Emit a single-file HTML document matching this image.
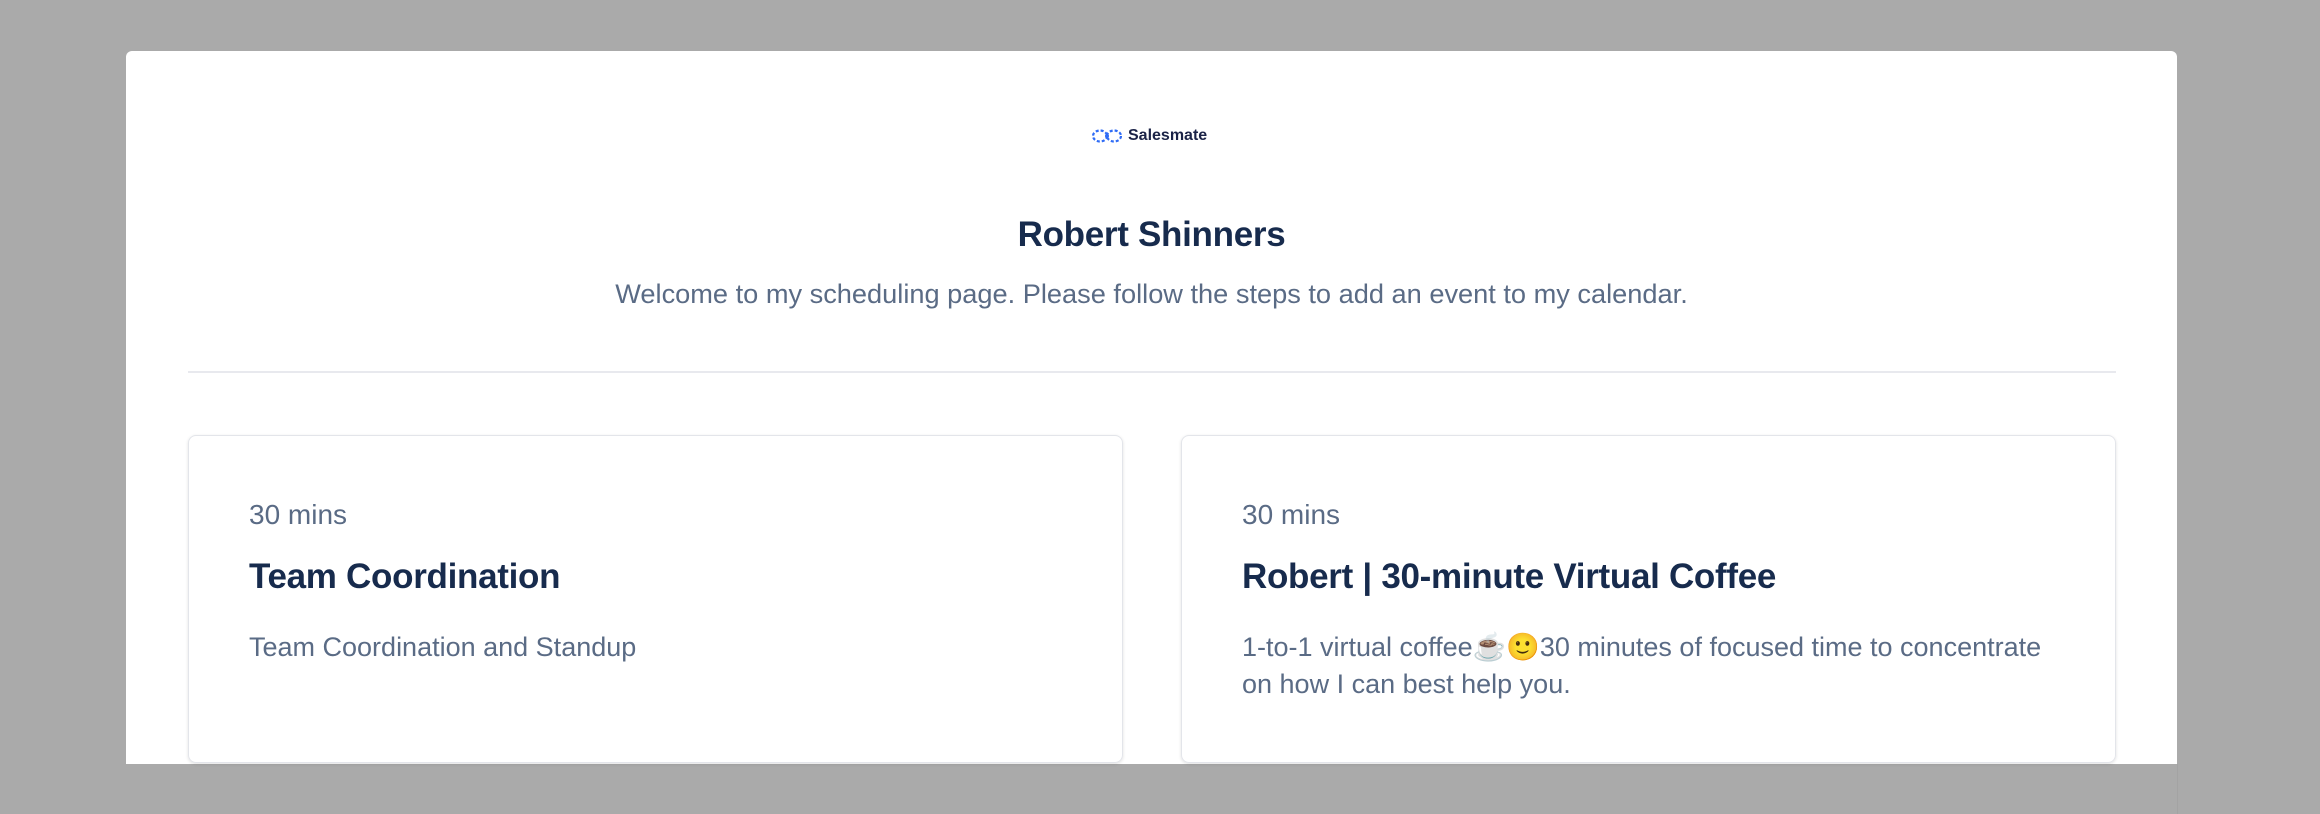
<!DOCTYPE html>
<html><head><meta charset="utf-8"><style>
*{margin:0;padding:0;box-sizing:border-box}
html,body{width:2320px;height:814px;background:#aaaaaa;overflow:hidden;font-family:"Liberation Sans",sans-serif}
.panel{position:absolute;left:126px;top:51px;width:2051px;height:713px;background:#fff;border-top-left-radius:6px;border-top-right-radius:6px}
.vline{position:absolute;left:2177px;top:764px;width:1px;height:50px;background:#a3a3a3}
.logo{position:absolute;left:1092px;top:127px;display:flex;align-items:center;gap:6px;font-weight:bold;font-size:16px;color:#1b2347}
.h1{position:absolute;left:126px;width:2051px;top:215px;text-align:center;font-size:35px;font-weight:600;color:#172b4d;letter-spacing:-0.3px}
.sub{position:absolute;left:126px;width:2051px;top:278px;text-align:center;font-size:27.2px;color:#5a6b85}
.sep{position:absolute;left:188px;top:371px;width:1928px;height:2px;background:#e8e9ee}
.card{position:absolute;top:435px;width:935px;height:328px;border:1.5px solid #e3e5ea;border-radius:8px;box-shadow:0 1px 3px rgba(0,0,0,.12);padding:0 60px;color:#5a6b85}
.card .m{position:absolute;left:60px;top:63px;font-size:28px}
.card .t{position:absolute;left:60px;top:121px;font-size:35px;font-weight:bold;color:#172b4d;letter-spacing:-0.3px}
.card .d{position:absolute;left:60px;top:193px;font-size:27px;line-height:37px;width:810px}
</style></head><body>
<div class="panel"></div>
<div class="vline"></div>
<div class="logo"><svg width="30" height="14" viewBox="0 0 30 14"><g fill="none" stroke="#2f6cf6" stroke-width="2.2" stroke-dasharray="3 2"><ellipse cx="8" cy="7" rx="7" ry="5.5"/><ellipse cx="22" cy="7" rx="7" ry="5.5"/></g><circle cx="15" cy="7" r="2" fill="#2f6cf6"/></svg><span>Salesmate</span></div>
<div class="h1">Robert Shinners</div>
<div class="sub">Welcome to my scheduling page. Please follow the steps to add an event to my calendar.</div>
<div class="sep"></div>
<div class="card" style="left:188px"><div class="m">30 mins</div><div class="t">Team Coordination</div><div class="d">Team Coordination and Standup</div></div>
<div class="card" style="left:1181px"><div class="m">30 mins</div><div class="t">Robert | 30-minute Virtual Coffee</div><div class="d">1-to-1 virtual coffee☕🙂30 minutes of focused time to concentrate on how I can best help you.</div></div>
</body></html>
